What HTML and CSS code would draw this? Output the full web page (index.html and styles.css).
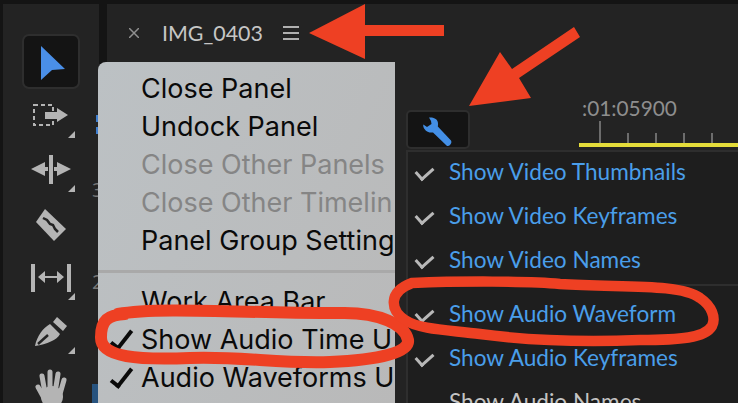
FILE: index.html
```html
<!DOCTYPE html>
<html lang="en">
<head>
  <meta charset="UTF-8">
  <title>IMG_0403 panel menus</title>
  <link rel="stylesheet" href="styles.css">
</head>
<body>
  <div class="tools">
    <div class="tool tool-active">
      <svg viewBox="24 36 54 51" width="54" height="51"><path class="tool-blue" d="M41 46 65 69 52 70 41 80Z"/></svg>
    </div>
    <div class="tool">
      <svg viewBox="24 88 54 54" width="54" height="54">
        <rect class="tool-dash" x="34" y="105" width="19" height="20"/>
        <path class="tool-fill" d="M45 112H57V108L68 115 57 122V119H45Z"/>
        <path class="tool-fill" d="M68 138 75 131V138Z"/>
      </svg>
    </div>
    <div class="tool">
      <svg viewBox="24 142 54 54" width="54" height="54">
        <path class="tool-fill" d="M49 155H53V184H49ZM31 169 45 162V167H48V171H45V176ZM71 169 57 162V167H54V171H57V176Z"/>
        <path class="tool-fill" d="M68 192 75 185V192Z"/>
      </svg>
    </div>
    <div class="tool">
      <svg viewBox="24 196 54 54" width="54" height="54">
        <path class="tool-fill" d="M45 209 66 229 54 241 36 222Z"/>
        <path class="tool-cut" d="M43 218 47 220 50 224 53 225 55 229 58 232"/>
      </svg>
    </div>
    <div class="tool">
      <svg viewBox="24 250 54 54" width="54" height="54">
        <path class="tool-fill" d="M31 264H35V292H31ZM67 264H71V292H67ZM38 277 45 271V276H57V271L64 277 57 283V278H45V283Z"/>
        <path class="tool-fill" d="M68 300 75 293V300Z"/>
      </svg>
    </div>
    <div class="tool">
      <svg viewBox="24 304 54 54" width="54" height="54">
        <path class="tool-fill" d="M57 317 67 326 63 331 53 322ZM50 324 60 334C57 340 47 344 35 346 37 336 43 328 50 324Z"/>
        <path class="tool-cut" d="M38 344 48 335"/>
        <path class="tool-fill" d="M68 354 75 347V354Z"/>
      </svg>
    </div>
    <div class="tool">
      <svg viewBox="24 358 54 54" width="54" height="54">
        <path class="tool-hand" d="M45 393 42 376M50 393V372M55 393 58 374M60 394 64 380M44 398 38 387"/>
        <circle class="tool-fill" cx="52" cy="397" r="11"/>
      </svg>
    </div>
    <span class="peek peek-num peek-three">3</span>
    <span class="peek peek-num peek-two">2</span>
    <span class="peek peek-dot peek-dot-a"></span>
    <span class="peek peek-dot peek-dot-b"></span>
    <span class="peek peek-clip"></span>
  </div>

  <div class="main">
    <div class="tab">
      <svg class="tab-close" viewBox="0 0 10 10" width="10" height="10"><path d="M0 0 10 10M10 0 0 10"/></svg>
      <span class="tab-title">IMG_0403</span>
      <span class="tab-menu"><i></i><i></i><i></i></span>
    </div>
    <div class="toolbar">
      <div class="wrench-btn">
        <svg viewBox="423 111 30 34" width="30" height="34">
          <path class="wrench" d="M429 115.5C433 115 437 116.5 437.8 120 438.2 122 438 123.5 437.8 124.5L451 138.5C452 140 451 142 450 143 449 144 447.5 144.5 446.5 143.5L433 130.5C430 131 426.5 130 424.5 127 423.5 125.5 423 124 423.3 122.5L427 125 431.5 122 431 119Z"/>
        </svg>
      </div>
      <div class="ruler">
        <div class="timecode">:01:05900</div>
        <div class="ticks"><i class="tick-major"></i><i></i><i></i><i></i><i></i></div>
        <div class="playbar"></div>
      </div>
    </div>
  </div>

  <div class="menu-light">
    <div class="light-item">Close Panel</div>
    <div class="light-item">Undock Panel</div>
    <div class="light-item is-disabled">Close Other Panels</div>
    <div class="light-item is-disabled">Close Other Timelin</div>
    <div class="light-item">Panel Group Setting</div>
    <div class="light-sep"></div>
    <div class="light-item">Work Area Bar</div>
    <div class="light-item is-checked">Show Audio Time U</div>
    <div class="light-item is-checked">Audio Waveforms U</div>
  </div>

  <div class="menu-dark">
    <div class="dark-item">Show Video Thumbnails</div>
    <div class="dark-item">Show Video Keyframes</div>
    <div class="dark-item">Show Video Names</div>
    <div class="dark-sep"></div>
    <div class="dark-item">Show Audio Waveform</div>
    <div class="dark-item">Show Audio Keyframes</div>
    <div class="dark-item is-plain">Show Audio Names</div>
  </div>

  <svg class="marks" viewBox="0 0 738 403" width="738" height="403">
    <path class="mark-fill" d="M309 33 365 4V25H444V36H365V59Z"/>
    <path class="mark-fill" d="M469 106 500 52 512 69 574 27 580 37 519 78 531 98Z"/>
    <path class="mark-line" d="M118 314C160 306 260 314 340 313 380 312 405 325 408 340 410 352 380 360 330 362 280 364 240 356 190 358 140 360 100 358 101 337 101 320 108 315 125 314"/>
    <path class="mark-line mark-thin" d="M412 283C460 281 530 281 560 284 620 288 680 283 700 298 712 306 716 318 712 326 705 338 680 340 640 340 590 342 540 342 480 334 450 330 420 330 405 320 390 310 388 292 412 283Z"/>
  </svg>
</body>
</html>
```

FILE: styles.css
```css
html, body {
  height: 100%;
}

body {
  margin: 0;
  height: 403px;
  overflow: hidden;
  position: relative;
  display: flex;
  gap: 8px;
  padding: 4px 0 0 3px;
  box-sizing: border-box;
  background-color: #141414;
  font-family: "Open Sans", sans-serif;
}

/* tool strip */
.tools {
  width: 96px;
  flex: none;
  padding-top: 32px;
  box-sizing: border-box;
  background-color: #232323;
  position: relative;
}

.tool {
  width: 54px;
  height: 54px;
  margin-left: 21px;
}

.tool svg {
  display: block;
}

.tool-active {
  height: 51px;
  margin-bottom: 1px;
  background-color: #141414;
  box-shadow: 0 0 0 2px #2e2e2e;
  border-radius: 5px;
}

.tool-blue {
  fill: #4a8fe8;
}

.tool-fill {
  fill: #b4b4b4;
}

.tool-dash {
  fill: none;
  stroke: #b4b4b4;
  stroke-width: 2;
  stroke-dasharray: 4 3;
}

.tool-cut {
  fill: none;
  stroke: #232323;
  stroke-width: 2.5;
}

.tool-hand {
  fill: none;
  stroke: #b4b4b4;
  stroke-width: 5;
  stroke-linecap: round;
}

/* bits of the next panel showing beside the menu */
.peek {
  position: absolute;
}

.peek-num {
  left: 89px;
  font-size: 20px;
  line-height: 24px;
  color: #777777;
}

.peek-three {
  top: 174px;
}

.peek-two {
  top: 266px;
}

.peek-dot {
  left: 93px;
  width: 2px;
  height: 7px;
  background-color: #3f7fd0;
}

.peek-dot-a {
  top: 111px;
}

.peek-dot-b {
  top: 123px;
}

.peek-clip {
  left: 89px;
  top: 380px;
  width: 6px;
  height: 19px;
  background-color: #27537f;
}

/* main panel */
.main {
  flex: 1;
  background-color: #232323;
  min-width: 0;
}

.tab {
  height: 58px;
  display: flex;
  align-items: center;
  padding-left: 22px;
  box-sizing: border-box;
}

.tab-close {
  flex: none;
}

.tab-close path {
  fill: none;
  stroke: #8f8f8f;
  stroke-width: 1.5;
}

.tab-title {
  margin-left: 23px;
  font-family: Lato, sans-serif;
  font-size: 21.4px;
  color: #c6c6c6;
}

.tab-menu {
  margin-left: 20px;
  width: 16px;
  display: flex;
  flex-direction: column;
  gap: 4px;
}

.tab-menu i {
  height: 2px;
  background-color: #b0b0b0;
}

.toolbar {
  display: flex;
  align-items: flex-start;
  padding-top: 48px;
  padding-left: 299px;
}

.wrench-btn {
  width: 60px;
  height: 35px;
  border: 2px solid #2e2e2e;
  border-radius: 5px;
  background-color: #141414;
  display: flex;
  align-items: center;
  justify-content: center;
  margin-right: 109px;
  flex: none;
}

.wrench {
  fill: #438fe6;
}

.ruler {
  flex: 1;
  margin-top: -14px;
}

.timecode {
  height: 24px;
  padding-left: 3px;
  font-family: Lato, sans-serif;
  font-size: 20.8px;
  line-height: 24px;
  color: #8e8e8e;
}

.ticks {
  height: 23px;
  display: flex;
  align-items: flex-end;
  padding-left: 20px;
  gap: 26px;
}

.ticks i {
  width: 2px;
  height: 10px;
  background-color: #6c6c6c;
}

.ticks .tick-major {
  height: 22px;
}

.playbar {
  height: 4px;
  background-color: #e4dc3a;
}

/* grey system menu */
.menu-light {
  position: absolute;
  left: 98px;
  top: 62px;
  width: 297px;
  height: 341px;
  padding-top: 8px;
  box-sizing: border-box;
  overflow: hidden;
  border-top-left-radius: 8px;
  background: linear-gradient(115deg, #bcc1c4, #b9b9b9);
  font-family: Inter, sans-serif;
  font-size: 27px;
  color: #0a0a0a;
}

.light-item {
  height: 38px;
  line-height: 38px;
  padding-left: 43px;
  white-space: nowrap;
  position: relative;
}

.light-item.is-disabled {
  color: #858585;
}

.light-item.is-checked::before {
  content: "";
  position: absolute;
  left: 18px;
  top: 5px;
  width: 7px;
  height: 20px;
  border-right: 4px solid #0a0a0a;
  border-bottom: 4px solid #0a0a0a;
  transform: rotate(38deg);
}

.light-sep {
  height: 3px;
  margin: 10px 0 10px;
  background-color: #a9a9a9;
}

/* dark flyout */
.menu-dark {
  position: absolute;
  left: 406px;
  top: 150px;
  right: 0;
  height: 253px;
  overflow: hidden;
  border-top: 2px solid #2e2e2e;
  border-left: 2px solid #2e2e2e;
  box-sizing: border-box;
  background-color: #1e1e1e;
  font-family: Lato, sans-serif;
  font-size: 22.6px;
  color: #4a9eea;
}

.dark-item {
  height: 40px;
  line-height: 40px;
  margin-bottom: 4px;
  padding-left: 41px;
  white-space: nowrap;
  position: relative;
}

.dark-item::before {
  content: "";
  position: absolute;
  left: 11px;
  top: 11px;
  width: 8px;
  height: 14px;
  border-right: 3.5px solid #b8b8b8;
  border-bottom: 3.5px solid #b8b8b8;
  transform: rotate(48deg);
}

.dark-item.is-plain {
  color: #c4c4c4;
}

.dark-item.is-plain::before {
  display: none;
}

.dark-sep {
  height: 2px;
  margin: 2px 0 8px;
  background-color: #2e2e2e;
}

/* red annotations */
.marks {
  position: absolute;
  left: 0;
  top: 0;
}

.mark-fill {
  fill: #ee4023;
}

.mark-line {
  fill: none;
  stroke: #ee4023;
  stroke-width: 12;
  stroke-linecap: round;
}

.mark-thin {
  stroke-width: 10.5;
}
```
